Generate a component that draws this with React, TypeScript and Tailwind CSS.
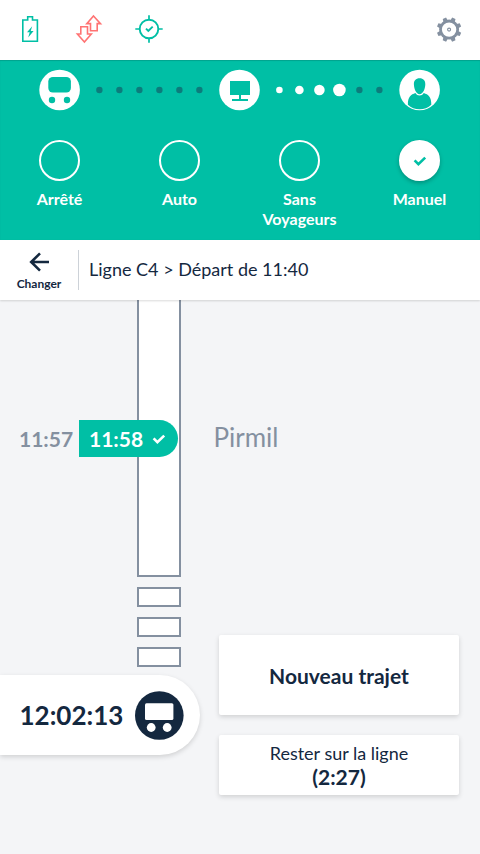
import React from "react";

const Battery = () => (
  <svg width="40" height="40" viewBox="10 10 40 40" fill="none">
    <path d="M22.8 20H27.7V16.8H32.5V20H37.4V41.2H22.8Z" stroke="#00BFA5" strokeWidth="1.6" />
    <path d="M32.2 26.2L27 32.2H29.7L28.2 37.4L33.6 30.9H30.7Z" fill="#00BFA5" />
  </svg>
);

const Transfer = () => (
  <svg width="40" height="40" viewBox="70 10 40 40" fill="none" stroke="#FF7373" strokeWidth="1.6">
    <path d="M93.5 16L100.5 23.6H97.2V30.7H90.5V23.6H86.8Z" />
    <path d="M84.4 42L77.4 34H80.8V26.8H87.5V34H91.3Z" />
  </svg>
);

const Target = () => (
  <svg width="40" height="40" viewBox="130 10 40 40" fill="none" stroke="#00BFA5">
    <circle cx="149" cy="29" r="9.3" strokeWidth="1.9" />
    <path d="M149 15.3V20M149 38V42.7M135.3 29H140M158 29H162.7" strokeWidth="1.7" />
    <path d="M146 28.7L148.3 31L152.7 26.6" strokeWidth="1.9" />
  </svg>
);

const teeth = [22.5, 67.5, 112.5, 157.5, 202.5, 247.5, 292.5, 337.5];

const Gear = () => (
  <svg width="40" height="40" viewBox="-20 -20 40 40" fill="none">
    <g transform="translate(0.1 -0.4)">
      <circle r="8.6" stroke="#8490A0" strokeWidth="2.8" />
      {teeth.map((angle) => (
        <path key={angle} d="M-2.3 -9L-1.8 -12.3H1.8L2.3 -9Z" fill="#8490A0" transform={`rotate(${angle})`} />
      ))}
      <circle r="1.5" stroke="#8490A0" strokeWidth="1.1" />
    </g>
  </svg>
);

const Bus = () => (
  <svg className="overflow-visible" width="40" height="40" viewBox="0.4 0 40 40">
    <circle cx="20" cy="20" r="20.3" fill="white" />
    <rect x="8.7" y="7" width="22.6" height="15.6" rx="4.6" fill="#00BFA5" />
    <circle cx="12.4" cy="30" r="3.2" fill="#00BFA5" />
    <circle cx="27.4" cy="30" r="3.2" fill="#00BFA5" />
  </svg>
);

const Screen = () => (
  <svg className="overflow-visible" width="40" height="40" viewBox="0.5 0 40 40">
    <circle cx="20" cy="20" r="20.3" fill="white" />
    <path d="M10.5 11H30.5V25H21.5V29H28.5V31H12.5V29H19.5V25H10.5Z" fill="#00BFA5" />
  </svg>
);

const Person = () => (
  <svg className="overflow-visible" width="40" height="40" viewBox="0.4 0 40 40">
    <circle cx="20" cy="20" r="20.3" fill="white" />
    <path d="M20 8.3C23.8 8.3 25.8 10.7 25.7 14.4C25.6 18.5 23.4 24.2 20 24.2C16.6 24.2 14.4 18.5 14.3 14.4C14.2 10.7 16.2 8.3 20 8.3Z" fill="#00BFA5" />
    <path d="M15.8 22.9C16.8 24.6 18.2 25.4 20 25.4C21.8 25.4 23.2 24.6 24.2 22.9C28.6 24.5 31.9 26.5 31.7 34.8C28.5 38 24.6 39.2 20 39.2C15.4 39.2 11.5 38 8.3 34.8C8.1 26.5 11.4 24.5 15.8 22.9Z" fill="#00BFA5" />
  </svg>
);

const Check = ({ className }: { className: string }) => (
  <svg className={className} width="14" height="14" viewBox="0 0 14 14" fill="none" stroke="currentColor" strokeWidth="2.6">
    <path d="M1.6 6.4L5.4 10.2L12.2 3.6" />
  </svg>
);

type Dot = { r: number; on?: boolean };

const Dots = ({ dots }: { dots: Dot[] }) => (
  <svg className="shrink-0" width="140" height="20" viewBox="0.6 0 140 20">
    {dots.map((dot, i) => (
      <circle key={i} cx={20 + i * 20} cy="10" r={dot.r} fill={dot.on ? "white" : "#0C7C7C"} />
    ))}
  </svg>
);

const off: Dot = { r: 3.2 };

const Mode = ({ label, active }: { label: string; active?: boolean }) => (
  <div className="flex w-[120px] shrink-0 flex-col items-center">
    <span
      className={`flex size-[41px] items-center justify-center rounded-full border-2 border-white ${
        active ? "bg-white shadow-[0_2px_4px_rgba(0,0,0,0.25)]" : ""
      }`}
    >
      {active && <Check className="size-[14px] text-[#00BFA5]" />}
    </span>
    <span className="mt-[8px] w-20 text-center text-base leading-[19.5px] font-bold text-white">{label}</span>
  </div>
);

export default function App() {
  return (
    <div className="flex h-[854px] w-[480px] flex-col overflow-hidden bg-[#F4F5F7] font-['Lato',sans-serif] text-[#14283F]">
      <header className="flex h-[60px] shrink-0 items-center justify-between bg-white pr-[11px] pl-[10px]">
        <div className="flex gap-5">
          <Battery />
          <Transfer />
          <Target />
        </div>
        <Gear />
      </header>

      <section className="h-[180px] shrink-0 bg-[#00BFA5] shadow-[inset_0_1px_1px_rgba(0,0,0,0.15)]">
        <div className="flex items-center pt-[10px] pl-10">
          <Bus />
          <Dots dots={[off, off, off, off, off, off]} />
          <Screen />
          <Dots
            dots={[{ r: 3.3, on: true }, { r: 4.3, on: true }, { r: 5.3, on: true }, { r: 6.3, on: true }, off, off]}
          />
          <Person />
        </div>
        <div className="-ml-[0.5px] flex pt-[30px]">
          <Mode label="Arrêté" />
          <Mode label="Auto" />
          <Mode label="Sans Voyageurs" />
          <Mode label="Manuel" active />
        </div>
      </section>

      <nav className="z-10 flex h-[60px] shrink-0 items-center bg-white shadow-[0_1px_2px_rgba(0,0,0,0.15)]">
        <button className="box-content flex h-10 w-[78px] flex-col items-center border-r border-[#CDD2D8]">
          <svg className="mt-[2px] shrink-0" width="20" height="20" viewBox="0 0 20 20" fill="none" stroke="#14283F" strokeWidth="2.6">
            <path d="M20 10H2M11 1.4L2.2 10L11 18.6" />
          </svg>
          <span className="mt-[4px] text-xs leading-[16px] font-bold">Changer</span>
        </button>
        <h1 className="-mt-[2px] ml-[10px] text-lg">Ligne C4 &gt; Départ de 11:40</h1>
      </nav>

      <main className="flex flex-1">
        <div className="flex w-[200px] shrink-0 flex-col">
          <div className="relative flex h-[375px]">
            <span className="w-[137px] shrink-0 pt-[125px] pl-[19px] text-[21px] leading-7 font-bold text-[#8490A0]">11:57</span>
            <div className="flex w-11 flex-col gap-[10px]">
              <div className="h-[277px] border-2 border-t-0 border-[#8490A0] bg-white" />
              <div className="h-5 border-2 border-[#8490A0] bg-white" />
              <div className="h-5 border-2 border-[#8490A0] bg-white" />
              <div className="h-5 border-2 border-[#8490A0] bg-white" />
            </div>
            <div className="absolute top-[120px] left-[79px] flex h-[36.5px] w-[98.5px] items-center justify-between rounded-r-full bg-[#00BFA5] pr-[12px] pl-[10px] text-[21px] font-bold text-white">
              11:58
              <Check className="mt-px" />
            </div>
          </div>
          <div className="flex h-20 items-center justify-between rounded-r-full bg-white pr-4 pl-[19.5px] text-[26px] font-bold shadow-[0_2px_5px_rgba(0,0,0,0.15)]">
            12:02:13
            <svg width="49" height="49" viewBox="0 0 49 49">
              <circle cx="24.3" cy="24.5" r="24.3" fill="#14283F" />
              <rect x="10" y="12.3" width="28.4" height="16.6" rx="1.5" fill="white" />
              <circle cx="16.2" cy="36.5" r="4.4" fill="white" />
              <circle cx="32.2" cy="36.5" r="4.4" fill="white" />
            </svg>
          </div>
        </div>

        <div className="ml-[19px] flex w-[240px] flex-col">
          <p className="-ml-[5.5px] h-[335px] pt-[119px] text-[26px] leading-[36px] text-[#8490A0]">Pirmil</p>
          <button className="h-20 rounded-[2px] bg-white pt-px text-[21px] font-bold shadow-[0_2px_5px_rgba(0,0,0,0.15)]">
            Nouveau trajet
          </button>
          <button className="mt-5 flex h-[60px] flex-col items-center justify-center rounded-[2px] bg-white text-lg leading-6 shadow-[0_2px_5px_rgba(0,0,0,0.15)]">
            <span>Rester sur la ligne</span>
            <span className="text-[21px] leading-6 font-bold">(2:27)</span>
          </button>
        </div>
      </main>
    </div>
  );
}
